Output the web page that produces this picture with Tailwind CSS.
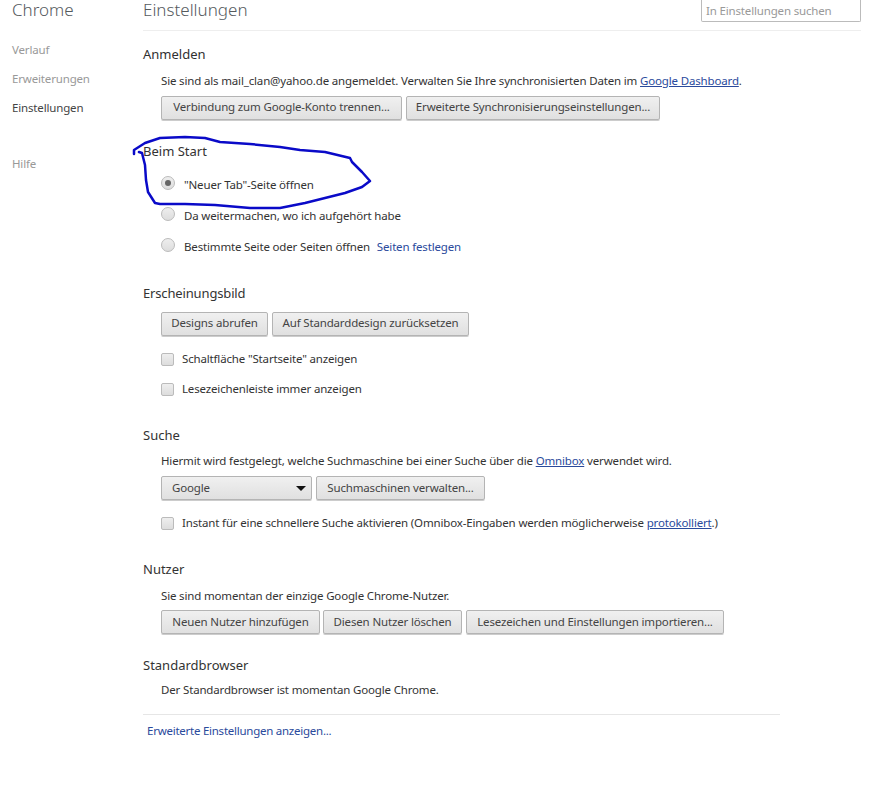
<!DOCTYPE html>
<html lang="de">
<head>
  <meta charset="UTF-8">
  <title>Einstellungen</title>
  <script src="https://cdn.jsdelivr.net/npm/@tailwindcss/browser@4"></script>
</head>
<body class="bg-white font-['Noto_Sans',sans-serif] text-[11.5px] tracking-[-0.16px] text-[#333] overflow-hidden">
<div class="relative w-[895px] h-[798px] flex">

  <!-- sidebar -->
  <div class="w-[143px] shrink-0 pl-[12px]">
    <div class="mt-[1px] h-[18px] leading-[18px] text-[17px] tracking-normal text-[#555a5e] font-light">Chrome</div>
    <ul class="mt-[22px] text-[#999]">
      <li class="h-[29px] leading-[18px]">Verlauf</li>
      <li class="h-[29px] leading-[18px]">Erweiterungen</li>
      <li class="h-[56px] leading-[18px] text-[#444]">Einstellungen</li>
      <li class="leading-[18px]">Hilfe</li>
    </ul>
  </div>

  <!-- main -->
  <div class="w-[718px] shrink-0">
    <div class="h-[31px] border-b border-[#eee] flex justify-between items-start">
      <h1 class="mt-[1px] h-[18px] leading-[18px] text-[17px] tracking-normal text-[#555a5e] font-light">Einstellungen</h1>
      <div class="w-[160px] h-[22px] border border-t-0 border-[#bbb] rounded-b-[2px] px-[4px] leading-[22px] text-[#999]">In Einstellungen suchen</div>
    </div>

    <section class="pt-[14px]">
      <h3 class="h-[18px] leading-[18px] text-[13px] tracking-normal text-[#303030]">Anmelden</h3>
      <div class="pl-[18px]">
        <p class="mt-[9px] h-[18px] leading-[18px]">Sie sind als mail_clan@yahoo.de angemeldet. Verwalten Sie Ihre synchronisierten Daten im <a class="text-[#2a4a9c] underline">Google Dashboard</a>.</p>
        <div class="mt-[6px] flex gap-[4px]">
          <button class="h-[24px] w-[241px] pb-[2px] border border-[#b4b4b4] rounded-[2px] bg-linear-to-b from-[#f0f0f0] to-[#e0e0e0] shadow-[0_1px_0_#ccc] text-[#444]">Verbindung zum Google-Konto trennen...</button>
          <button class="h-[24px] w-[254px] pb-[2px] border border-[#b4b4b4] rounded-[2px] bg-linear-to-b from-[#f0f0f0] to-[#e0e0e0] shadow-[0_1px_0_#ccc] text-[#444]">Erweiterte Synchronisierungseinstellungen...</button>
        </div>
      </div>
    </section>

    <section class="pt-[22px]">
      <h3 class="h-[18px] leading-[18px] text-[13px] tracking-normal">Beim Start</h3>
      <div class="pl-[18px] pt-[15px]">
        <div class="h-[31px] flex items-start gap-[9px]">
          <span class="mt-[1px] w-[14px] h-[14px] rounded-full border border-[#bbb] bg-linear-to-b from-[#eee] to-[#ddd] flex items-center justify-center"><span class="w-[6px] h-[6px] rounded-full bg-[#666]"></span></span>
          <span class="mt-[2px] leading-[16px]">"Neuer Tab"-Seite öffnen</span>
        </div>
        <div class="h-[31px] flex items-start gap-[9px]">
          <span class="mt-[1px] w-[14px] h-[14px] rounded-full border border-[#bbb] bg-linear-to-b from-[#eee] to-[#ddd]"></span>
          <span class="mt-[2px] leading-[16px]">Da weitermachen, wo ich aufgehört habe</span>
        </div>
        <div class="h-[18px] flex items-start gap-[9px]">
          <span class="mt-[1px] w-[14px] h-[14px] rounded-full border border-[#bbb] bg-linear-to-b from-[#eee] to-[#ddd]"></span>
          <span class="mt-[2px] leading-[16px]">Bestimmte Seite oder Seiten öffnen <a class="ml-[4px] text-[#2a4a9c]">Seiten festlegen</a></span>
        </div>
      </div>
    </section>

    <section class="pt-[29px]">
      <h3 class="h-[18px] leading-[18px] text-[13px] tracking-[-0.15px]">Erscheinungsbild</h3>
      <div class="pl-[18px]">
        <div class="mt-[10px] flex gap-[4px]">
          <button class="h-[24px] w-[107px] pb-[2px] border border-[#b4b4b4] rounded-[2px] bg-linear-to-b from-[#f0f0f0] to-[#e0e0e0] shadow-[0_1px_0_#ccc] text-[#444]">Designs abrufen</button>
          <button class="h-[24px] w-[197px] pb-[2px] border border-[#b4b4b4] rounded-[2px] bg-linear-to-b from-[#f0f0f0] to-[#e0e0e0] shadow-[0_1px_0_#ccc] text-[#444]">Auf Standarddesign zurücksetzen</button>
        </div>
        <div class="mt-[15px] h-[16px] flex items-center gap-[8px]">
          <span class="w-[13px] h-[13px] rounded-[2px] border border-[#bbb] bg-linear-to-b from-[#eee] to-[#ddd]"></span>
          <span class="leading-[16px]">Schaltfläche "Startseite" anzeigen</span>
        </div>
        <div class="mt-[14px] h-[16px] flex items-center gap-[8px]">
          <span class="w-[13px] h-[13px] rounded-[2px] border border-[#bbb] bg-linear-to-b from-[#eee] to-[#ddd]"></span>
          <span class="leading-[16px]">Lesezeichenleiste immer anzeigen</span>
        </div>
      </div>
    </section>

    <section class="pt-[29px]">
      <h3 class="h-[18px] leading-[18px] text-[13px] tracking-normal">Suche</h3>
      <div class="pl-[18px]">
        <p class="mt-[8px] h-[18px] leading-[18px]">Hiermit wird festgelegt, welche Suchmaschine bei einer Suche über die <a class="text-[#2a4a9c] underline">Omnibox</a> verwendet wird.</p>
        <div class="mt-[6px] flex gap-[4px]">
          <div class="h-[24px] w-[151px] border border-[#b4b4b4] rounded-[2px] bg-linear-to-b from-[#f0f0f0] to-[#e0e0e0] shadow-[0_1px_0_#ccc] text-[#444] pl-[10px] pr-[4px] flex items-center justify-between">
            <span>Google</span>
            <svg width="10" height="5" viewBox="0 0 10 5" class="mr-[1px]"><path d="M0 0h10L5 5z" fill="#111"/></svg>
          </div>
          <button class="h-[24px] w-[169px] border border-[#b4b4b4] rounded-[2px] bg-linear-to-b from-[#f0f0f0] to-[#e0e0e0] shadow-[0_1px_0_#ccc] text-[#444]">Suchmaschinen verwalten...</button>
        </div>
        <div class="mt-[15px] h-[16px] flex items-center gap-[8px]">
          <span class="w-[13px] h-[13px] rounded-[2px] border border-[#bbb] bg-linear-to-b from-[#eee] to-[#ddd]"></span>
          <span class="leading-[16px]">Instant für eine schnellere Suche aktivieren (Omnibox-Eingaben werden möglicherweise <a class="text-[#2a4a9c] underline">protokolliert</a>.)</span>
        </div>
      </div>
    </section>

    <section class="pt-[29px]">
      <h3 class="h-[18px] leading-[18px] text-[13px] tracking-normal">Nutzer</h3>
      <div class="pl-[18px]">
        <p class="mt-[9px] h-[18px] leading-[18px]">Sie sind momentan der einzige Google Chrome-Nutzer.</p>
        <div class="mt-[5px] flex gap-[3px]">
          <button class="h-[24px] w-[159px] border border-[#b4b4b4] rounded-[2px] bg-linear-to-b from-[#f0f0f0] to-[#e0e0e0] shadow-[0_1px_0_#ccc] text-[#444]">Neuen Nutzer hinzufügen</button>
          <button class="h-[24px] w-[139px] border border-[#b4b4b4] rounded-[2px] bg-linear-to-b from-[#f0f0f0] to-[#e0e0e0] shadow-[0_1px_0_#ccc] text-[#444]">Diesen Nutzer löschen</button>
          <button class="ml-[1px] h-[24px] w-[258px] border border-[#b4b4b4] rounded-[2px] bg-linear-to-b from-[#f0f0f0] to-[#e0e0e0] shadow-[0_1px_0_#ccc] text-[#444]">Lesezeichen und Einstellungen importieren...</button>
        </div>
      </div>
    </section>

    <section class="pt-[22px]">
      <h3 class="h-[18px] leading-[18px] text-[13px] tracking-normal">Standardbrowser</h3>
      <p class="pl-[18px] mt-[7px] h-[18px] leading-[18px]">Der Standardbrowser ist momentan Google Chrome.</p>
    </section>

    <div class="mt-[15px] w-[637px] border-t border-[#e6e6e6] pt-[7px] pl-[4px] leading-[18px]">
      <a class="text-[#2a4a9c] tracking-[-0.25px]">Erweiterte Einstellungen anzeigen...</a>
    </div>
  </div>

  <!-- hand-drawn circle over the screenshot -->
  <svg class="absolute left-0 top-0 pointer-events-none" width="895" height="798" viewBox="0 0 895 798" fill="none">
    <path d="M134 154L134 150L145 143L160 138L185 137L205 138L220 142L250 144L280 147L300 150L325 152L350 158L352 162L362 172L370 181L362 187L345 193L325 198L305 203L280 208L250 208L215 205L185 204L160 204L155 203L148 192L146 180L145 165L142 153L139 152" stroke="#0a0ac8" stroke-width="2.5" stroke-linejoin="round" stroke-linecap="round"/>
  </svg>
</div>
</body>
</html>
